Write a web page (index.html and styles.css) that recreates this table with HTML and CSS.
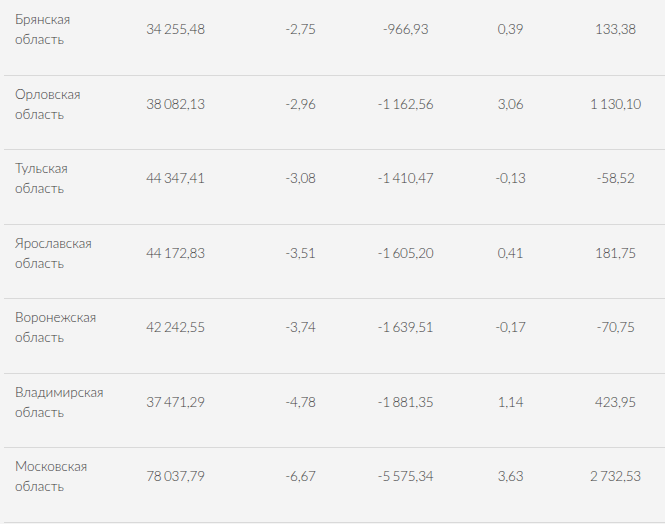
FILE: index.html
```html
<!DOCTYPE html>
<html lang="ru">
<head>
<meta charset="utf-8">
<link rel="stylesheet" href="styles.css">
</head>
<body>
<div class="table">
  <div class="row">
    <div class="name">Брянская<br>область</div>
    <div class="num">34 255,48</div>
    <div class="num">-2,75</div>
    <div class="num">-966,93</div>
    <div class="num">0,39</div>
    <div class="num">133,38</div>
  </div>
  <div class="row">
    <div class="name">Орловская<br>область</div>
    <div class="num">38 082,13</div>
    <div class="num">-2,96</div>
    <div class="num">-1 162,56</div>
    <div class="num">3,06</div>
    <div class="num">1 130,10</div>
  </div>
  <div class="row">
    <div class="name">Тульская<br>область</div>
    <div class="num">44 347,41</div>
    <div class="num">-3,08</div>
    <div class="num">-1 410,47</div>
    <div class="num">-0,13</div>
    <div class="num">-58,52</div>
  </div>
  <div class="row">
    <div class="name">Ярославская<br>область</div>
    <div class="num">44 172,83</div>
    <div class="num">-3,51</div>
    <div class="num">-1 605,20</div>
    <div class="num">0,41</div>
    <div class="num">181,75</div>
  </div>
  <div class="row">
    <div class="name">Воронежская<br>область</div>
    <div class="num">42 242,55</div>
    <div class="num">-3,74</div>
    <div class="num">-1 639,51</div>
    <div class="num">-0,17</div>
    <div class="num">-70,75</div>
  </div>
  <div class="row">
    <div class="name">Владимирская<br>область</div>
    <div class="num">37 471,29</div>
    <div class="num">-4,78</div>
    <div class="num">-1 881,35</div>
    <div class="num">1,14</div>
    <div class="num">423,95</div>
  </div>
  <div class="row">
    <div class="name">Московская<br>область</div>
    <div class="num">78 037,79</div>
    <div class="num">-6,67</div>
    <div class="num">-5 575,34</div>
    <div class="num">3,63</div>
    <div class="num">2 732,53</div>
  </div>
</div>
</body>
</html>
```

FILE: styles.css
```css
html, body {
  margin: 0;
  padding: 0;
  background: #f4f4f4;
  overflow: hidden;
}
body {
  font-family: Lato, "Open Sans", sans-serif;
  font-weight: 300;
  font-size: 13.5px;
  color: #404040;
}
.table {
  margin-left: 4px;
  padding-top: 1px;
  width: 664px;
}
.row {
  display: grid;
  grid-template-columns: 99px 145px 105px 105px 105px 105px;
  align-items: center;
  box-sizing: border-box;
  height: 74.5px;
  padding: 8px 0 25px;
  border-bottom: 1px solid #d9d9d9;
}
.name {
  padding-left: 11px;
  line-height: 20px;
}
.num {
  text-align: center;
  line-height: 20px;
  word-spacing: -1px;
  letter-spacing: -0.2px;
}
```
